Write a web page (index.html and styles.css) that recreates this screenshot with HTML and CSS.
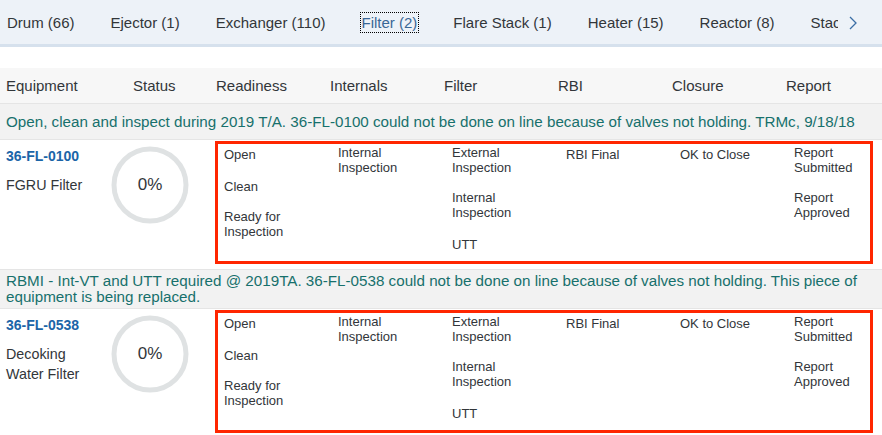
FILE: index.html
```html
<!DOCTYPE html>
<html lang="en">
<head>
  <meta charset="UTF-8" />
  <title>Equipment Readiness</title>
  <link rel="stylesheet" href="styles.css">
</head>
<body>

  <div class="tabbar">
    <div class="tabs">
      <span class="tab">Drum (66)</span>
      <span class="tab">Ejector (1)</span>
      <span class="tab">Exchanger (110)</span>
      <span class="tab active"><span class="focus">Filter (2)</span></span>
      <span class="tab">Flare Stack (1)</span>
      <span class="tab">Heater (15)</span>
      <span class="tab">Reactor (8)</span>
      <span class="tab">Stack (4)</span>
    </div>
    <div class="more">
      <svg width="10" height="14" viewBox="0 0 10 14"><path d="M2 1 L8 7 L2 13" fill="none" stroke="#3a6ea5" stroke-width="1.3"/></svg>
    </div>
  </div>

  <div class="thead">
    <div>Equipment</div>
    <div>Status</div>
    <div>Readiness</div>
    <div>Internals</div>
    <div>Filter</div>
    <div>RBI</div>
    <div>Closure</div>
    <div>Report</div>
  </div>

  <div class="note">Open, clean and inspect during 2019 T/A. 36-FL-0100 could not be done on line because of valves not holding. TRMc, 9/18/18</div>
  <div class="row">
    <div class="equip">
      <a class="eq-id">36-FL-0100</a>
      <div class="eq-name">FGRU Filter</div>
    </div>
    <div class="status">
      <div class="ring">
        <svg width="78" height="78" viewBox="0 0 78 78"><circle cx="39" cy="39" r="36" fill="none" stroke="#dfe2e3" stroke-width="5"/></svg>
        <span class="pct">0%</span>
      </div>
    </div>
    <div class="steps">
      <div class="col"><div class="item">Open</div><div class="item">Clean</div><div class="item">Ready for Inspection</div></div>
      <div class="col"><div class="item wrap">Internal Inspection</div></div>
      <div class="col"><div class="item wrap">External Inspection</div><div class="item wrap">Internal Inspection</div><div class="item">UTT</div></div>
      <div class="col"><div class="item">RBI Final</div></div>
      <div class="col"><div class="item">OK to Close</div></div>
      <div class="col"><div class="item wrap">Report Submitted</div><div class="item wrap">Report Approved</div></div>
    </div>
  </div>

  <div class="note">RBMI - Int-VT and UTT required @ 2019TA. 36-FL-0538 could not be done on line because of valves not holding. This piece of equipment is being replaced.</div>
  <div class="row">
    <div class="equip">
      <a class="eq-id">36-FL-0538</a>
      <div class="eq-name">Decoking Water Filter</div>
    </div>
    <div class="status">
      <div class="ring">
        <svg width="78" height="78" viewBox="0 0 78 78"><circle cx="39" cy="39" r="36" fill="none" stroke="#dfe2e3" stroke-width="5"/></svg>
        <span class="pct">0%</span>
      </div>
    </div>
    <div class="steps">
      <div class="col"><div class="item">Open</div><div class="item">Clean</div><div class="item">Ready for Inspection</div></div>
      <div class="col"><div class="item wrap">Internal Inspection</div></div>
      <div class="col"><div class="item wrap">External Inspection</div><div class="item wrap">Internal Inspection</div><div class="item">UTT</div></div>
      <div class="col"><div class="item">RBI Final</div></div>
      <div class="col"><div class="item">OK to Close</div></div>
      <div class="col"><div class="item wrap">Report Submitted</div><div class="item wrap">Report Approved</div></div>
    </div>
  </div>

</body>
</html>
```
FILE: styles.css
```css
html, body {
  margin: 0;
  padding: 0;
  background: #fff;
  color: #32363a;
  font-family: 'Liberation Sans', Arial, sans-serif;
  font-size: 14px;
  overflow: hidden;
}

/* tab strip */
.tabbar {
  display: flex;
  height: 44px;
  background: #edf2f8;
  border-bottom: 3px solid #d6e1ed;
}

.tabs {
  display: flex;
  gap: 36px;
  width: 838px;
  overflow: hidden;
  padding-left: 7px;
  box-sizing: border-box;
  white-space: nowrap;
}

.tab {
  display: flex;
  align-items: center;
  height: 44px;
  font-size: 15px;
  border-bottom: 3px solid transparent;
}

.tab.active {
  color: #3a6796;
  border-bottom-color: #3d6a98;
}

.tab .focus {
  outline: 1px dotted #000;
  outline-offset: 1px;
}

.more {
  flex: 1;
  display: flex;
  align-items: center;
  padding-left: 10px;
  padding-top: 2px;
}

/* table header */
.thead {
  display: grid;
  grid-template-columns: 127px 83px repeat(5, 114px) 1fr;
  margin-top: 21px;
  height: 35px;
  align-items: center;
  background: #f7f7f7;
  border-bottom: 1px solid #e5e5e5;
  font-size: 15px;
}

.thead div {
  padding-left: 6px;
}

/* group comment */
.note {
  display: flex;
  align-items: center;
  min-height: 36px;
  box-sizing: border-box;
  padding: 3px 6px;
  background: #f2f2f2;
  border-bottom: 1px solid #e5e5e5;
  color: #17706c;
  font-size: 15.2px;
  line-height: 16px;
}

/* equipment row */
.row {
  display: grid;
  grid-template-columns: 108px 102px 1fr;
  padding: 1px 0 5px;
  border-bottom: 1px solid #e5e5e5;
}

.equip {
  padding: 5px 6px 0;
  line-height: 20px;
}

.eq-id {
  display: block;
  color: #1b65a8;
  font-weight: bold;
}

.eq-name {
  margin-top: 9px;
  font-size: 14.3px;
}

.status {
  padding: 5px 0 0 3px;
}

.ring {
  position: relative;
  width: 78px;
  height: 78px;
}

.ring svg {
  display: block;
}

.pct {
  position: absolute;
  top: 0; left: 0;
  width: 100%; height: 100%;
  display: flex;
  align-items: center;
  justify-content: center;
  font-size: 17px;
}

.steps {
  display: grid;
  grid-template-columns: repeat(5, 114px) 1fr;
  margin: 0 9px 0 5px;
  padding: 1px 0 7px 6px;
  border: 3px solid #ff2600;
  font-size: 13px;
  line-height: 15px;
}

.col {
  display: flex;
  flex-direction: column;
  gap: 13px;
}

.item {
  min-height: 19px;
  display: flex;
  align-items: center;
  padding-right: 10px;
}

.item.wrap {
  padding-bottom: 2px;
}
```
